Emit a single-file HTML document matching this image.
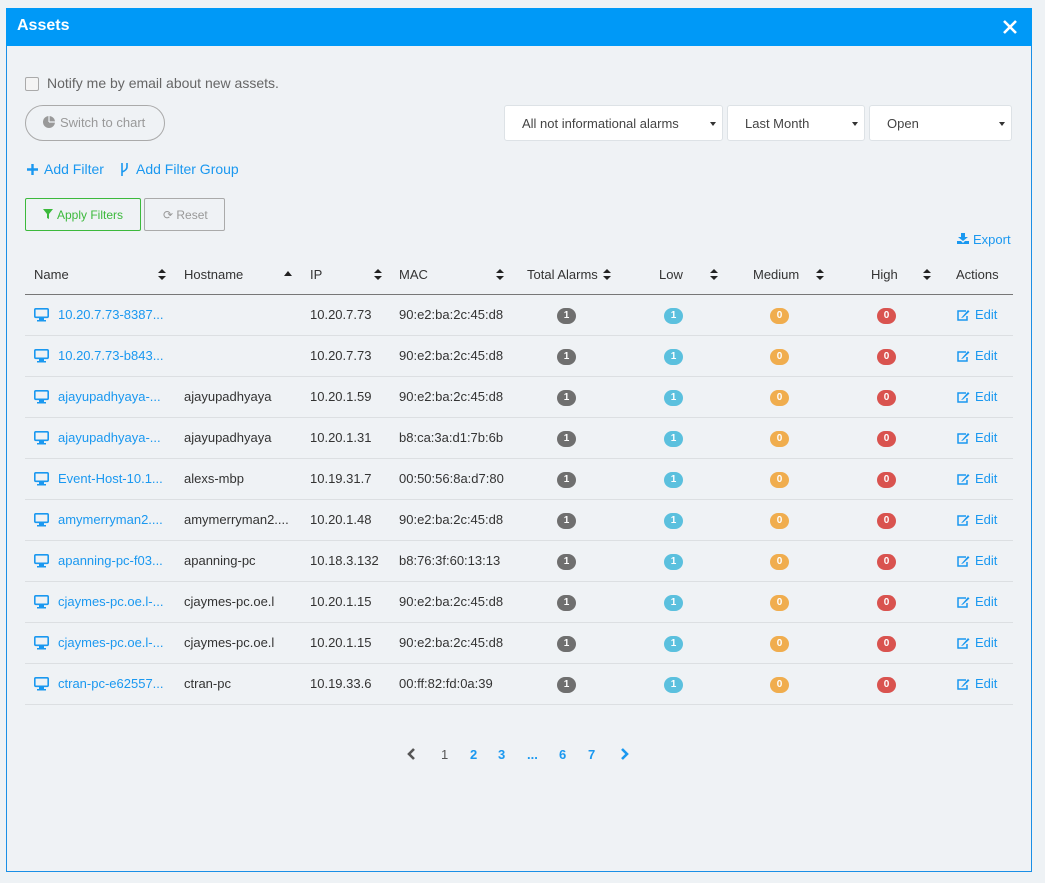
<!DOCTYPE html>
<html><head><meta charset="utf-8"><style>
*{box-sizing:border-box;margin:0;padding:0}
body{width:1045px;height:883px;background:#eef2f5;font-family:"Liberation Sans",sans-serif;font-size:13px;color:#333;position:relative;overflow:hidden}
.a{position:absolute;white-space:nowrap}
.modal{position:absolute;left:6px;top:8px;width:1026px;height:864px;border:1px solid #1a8fe6;background:#eff2f5}
.hdr{position:absolute;left:6px;top:8px;width:1026px;height:38px;background:#0099f7}
.blue{color:#1a98f0}
.sel{position:absolute;top:105px;height:36px;background:#fff;border:1px solid #dde2e6;border-radius:3px;font-size:13px;color:#444;padding:10px 0 0 17px}
.sel:after{content:"";position:absolute;right:6px;top:16px;border-left:3px solid transparent;border-right:3px solid transparent;border-top:4px solid #333}
.hline{position:absolute;left:25px;width:988px;height:1px;background:#dcdfe2}
.b{position:absolute;width:19px;height:16px;border-radius:8px;color:#fff;font-size:10px;font-weight:bold;text-align:center;line-height:16px}
.srt{position:absolute}
</style></head><body>
<div class="modal"></div>
<div class="hdr"></div>
<div class="a" style="left:17px;top:17px;color:#fff;font-weight:bold;font-size:16px">Assets</div>
<svg class="a" style="left:1003px;top:20px" width="14" height="14"><path d="M1 1L13 13M13 1L1 13" stroke="#fff" stroke-width="2.6"/></svg>
<div class="a" style="left:25px;top:77px;width:14px;height:14px;border:1px solid #aaa;border-radius:2px;background:#f4f4f4"></div>
<div class="a" style="left:47px;top:75px;font-size:14px;color:#666">Notify me by email about new assets.</div>
<div class="a" style="left:25px;top:105px;width:140px;height:36px;border:1px solid #aaa;border-radius:18px;color:#999;padding:9px 0 0 17px"><svg width="12" height="12" style="vertical-align:-1px;margin-right:5px"><circle cx="6" cy="6" r="6" fill="#999"/><path d="M6 6V0M6 6H12" stroke="#eff2f5" stroke-width="1.2"/></svg>Switch to chart</div>
<div class="sel" style="left:504px;width:219px">All not informational alarms</div>
<div class="sel" style="left:727px;width:138px">Last Month</div>
<div class="sel" style="left:869px;width:143px">Open</div>
<svg class="a" style="left:27px;top:164px" width="11" height="11"><path d="M5.5 0V11M0 5.5H11" stroke="#1a98f0" stroke-width="2.4"/></svg>
<div class="a blue" style="left:44px;top:161px;font-size:14px">Add Filter</div>
<svg class="a" style="left:120px;top:163px" width="9" height="13"><path d="M2 0V13M7 0V4Q7 7 2 9" stroke="#1a98f0" stroke-width="1.6" fill="none"/></svg>
<div class="a blue" style="left:136px;top:161px;font-size:14px">Add Filter Group</div>
<div class="a" style="left:25px;top:198px;width:116px;height:33px;border:1px solid #3cb93c;border-radius:2px;color:#3cb93c;padding:9px 0 0 17px;font-size:12px"><svg width="10" height="10" style="margin-right:4px"><path d="M0 0H10L6 5V10L4 9V5Z" fill="#3cb93c"/></svg>Apply Filters</div>
<div class="a" style="left:144px;top:198px;width:81px;height:33px;border:1px solid #aaa;border-radius:2px;color:#999;padding:9px 0 0 18px;font-size:12px">⟳ Reset</div>
<div class="a blue" style="left:957px;top:232px"><svg width="12" height="11" style="margin-right:4px"><path d="M4 0H8V4H11L6 8L1 4H4Z M0 8H4L6 10L8 8H12V11H0Z" fill="#1a98f0"/></svg>Export</div>
<div class="a" style="left:34px;top:267px">Name</div>
<div class="a" style="left:184px;top:267px">Hostname</div>
<div class="a" style="left:310px;top:267px">IP</div>
<div class="a" style="left:399px;top:267px">MAC</div>
<div class="a" style="left:527px;top:267px">Total Alarms</div>
<div class="a" style="left:659px;top:267px">Low</div>
<div class="a" style="left:753px;top:267px">Medium</div>
<div class="a" style="left:871px;top:267px">High</div>
<div class="a" style="left:956px;top:267px">Actions</div>
<svg class="a" style="left:0;top:268px" width="1045" height="14" id="srt"></svg>
<div class="hline" style="top:294px;background:#777"></div>
<div id="rows"></div>
<script>
var s="";[158,374,496,603,710,816,923].forEach(function(x){s+='<path d="M'+x+' 5L'+(x+4)+' 1L'+(x+8)+' 5ZM'+x+' 8L'+(x+4)+' 12L'+(x+8)+' 8Z" fill="#222"/>';});
s+='<path d="M284 8L288 3L292 8Z" fill="#222"/>';
document.getElementById("srt").innerHTML=s;
var d=[["10.20.7.73-8387...","","10.20.7.73","90:e2:ba:2c:45:d8"],["10.20.7.73-b843...","","10.20.7.73","90:e2:ba:2c:45:d8"],["ajayupadhyaya-...","ajayupadhyaya","10.20.1.59","90:e2:ba:2c:45:d8"],["ajayupadhyaya-...","ajayupadhyaya","10.20.1.31","b8:ca:3a:d1:7b:6b"],["Event-Host-10.1...","alexs-mbp","10.19.31.7","00:50:56:8a:d7:80"],["amymerryman2....","amymerryman2....","10.20.1.48","90:e2:ba:2c:45:d8"],["apanning-pc-f03...","apanning-pc","10.18.3.132","b8:76:3f:60:13:13"],["cjaymes-pc.oe.l-...","cjaymes-pc.oe.l","10.20.1.15","90:e2:ba:2c:45:d8"],["cjaymes-pc.oe.l-...","cjaymes-pc.oe.l","10.20.1.15","90:e2:ba:2c:45:d8"],["ctran-pc-e62557...","ctran-pc","10.19.33.6","00:ff:82:fd:0a:39"]];
var h="";d.forEach(function(r,i){var y=294+41*i;var t=y+13;
h+='<svg class="a" style="left:34px;top:'+(t+1)+'px" width="15" height="14"><rect x="0.8" y="0.8" width="13.4" height="8.5" rx="1" fill="none" stroke="#1a98f0" stroke-width="1.6"/><rect x="5" y="10" width="5" height="2" fill="#1a98f0"/><rect x="3" y="12" width="9" height="1.5" fill="#1a98f0"/></svg>';
h+='<div class="a blue" style="left:58px;top:'+t+'px">'+r[0]+'</div><div class="a" style="left:184px;top:'+t+'px">'+r[1]+'</div><div class="a" style="left:310px;top:'+t+'px">'+r[2]+'</div><div class="a" style="left:399px;top:'+t+'px">'+r[3]+'</div>';
h+='<div class="b" style="left:557px;top:'+(t+1)+'px;background:#6f6f6f">1</div><div class="b" style="left:664px;top:'+(t+1)+'px;background:#5bc0de">1</div><div class="b" style="left:770px;top:'+(t+1)+'px;background:#f0ad4e">0</div><div class="b" style="left:877px;top:'+(t+1)+'px;background:#d9534f">0</div>';
h+='<svg class="a" style="left:957px;top:'+(t+2)+'px" width="13" height="12"><path d="M9 2H1V11H10V7" stroke="#1a98f0" stroke-width="1.5" fill="none"/><path d="M5 8L11 1L12.5 2.5L6 8.5L4 9Z" fill="#1a98f0"/></svg><div class="a blue" style="left:975px;top:'+t+'px">Edit</div><div class="hline" style="top:'+(y+41)+'px"></div>';});
document.getElementById("rows").innerHTML=h;
</script>
<svg class="a" style="left:407px;top:748px" width="9" height="12"><path d="M7 1L2 6L7 11" stroke="#555" stroke-width="2.6" fill="none"/></svg>
<div class="a" style="left:441px;top:747px;color:#555">1</div>
<div class="a blue" style="left:470px;top:747px;font-weight:bold">2</div>
<div class="a blue" style="left:498px;top:747px;font-weight:bold">3</div>
<div class="a blue" style="left:527px;top:747px;font-weight:bold">...</div>
<div class="a blue" style="left:559px;top:747px;font-weight:bold">6</div>
<div class="a blue" style="left:588px;top:747px;font-weight:bold">7</div>
<svg class="a" style="left:620px;top:748px" width="9" height="12"><path d="M2 1L7 6L2 11" stroke="#1a98f0" stroke-width="2.6" fill="none"/></svg>
</body></html>
